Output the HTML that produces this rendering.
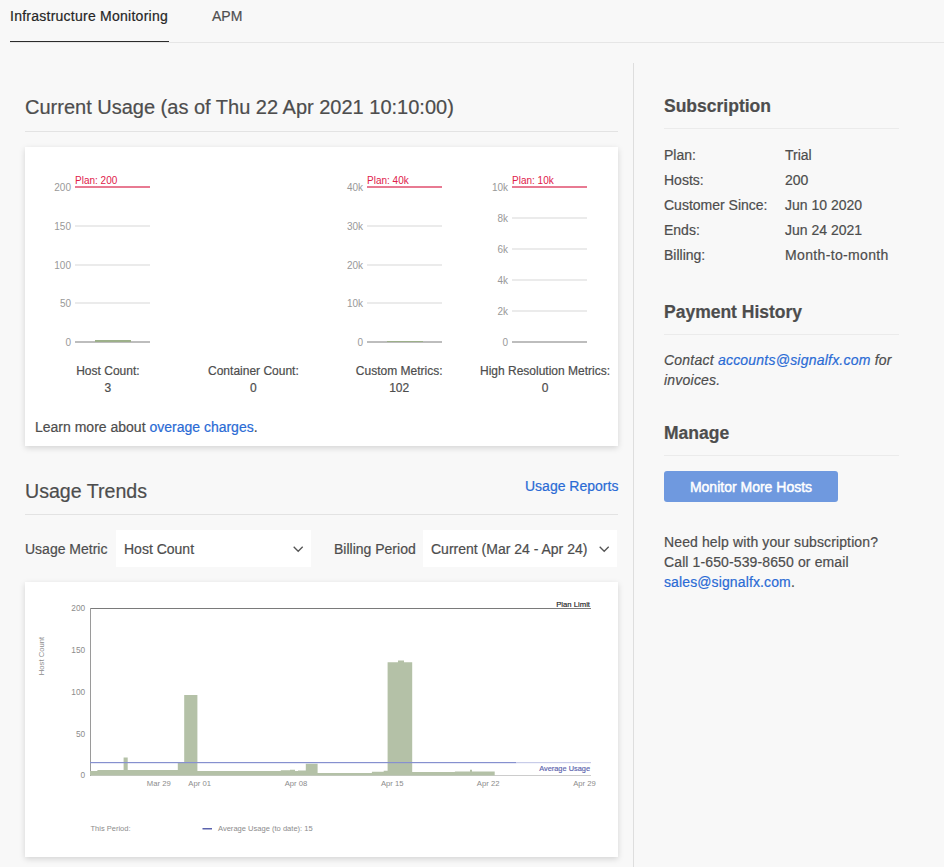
<!DOCTYPE html>
<html><head><meta charset="utf-8">
<style>
*{box-sizing:border-box;margin:0;padding:0}
html,body{width:944px;height:867px;overflow:hidden;background:#f8f8f8;font-family:"Liberation Sans",sans-serif;color:#4a4a4a;-webkit-text-stroke:0.2px currentColor}
.a{position:absolute;white-space:nowrap}
.hr{position:absolute;height:1px;background:#e3e3e3}
.card{position:absolute;background:#fff;box-shadow:0 2px 6px rgba(0,0,0,0.15)}
.lnk{color:#2a6bd5}
</style></head><body>
<!-- tabs -->
<div class="a" style="left:10px;top:8px;font-size:14px;line-height:16px;color:#262626;letter-spacing:0.25px">Infrastructure Monitoring</div>
<div class="a" style="left:212px;top:8px;font-size:14px;line-height:16px;color:#4f4f4f">APM</div>
<div class="hr" style="left:10px;top:42px;width:934px;background:#e6e6e6"></div>
<div class="a" style="left:10px;top:41px;width:159px;height:1px;background:#2b2b2b"></div>

<!-- vertical divider -->
<div class="a" style="left:633px;top:63px;width:1px;height:804px;background:#dedede"></div>

<!-- Current Usage -->
<div class="a" style="left:25px;top:97px;font-size:20px;line-height:20px;color:#4d4d4d">Current Usage (as of Thu 22 Apr 2021 10:10:00)</div>
<div class="hr" style="left:25px;top:131px;width:593px"></div>

<div class="card" style="left:25px;top:147px;width:593px;height:299px"></div>

<!-- usage trends -->
<div class="a" style="left:25px;top:481px;font-size:19.6px;line-height:20px;color:#4d4d4d">Usage Trends</div>
<div class="a lnk" style="left:525px;top:478px;font-size:14px;line-height:16px">Usage Reports</div>
<div class="hr" style="left:25px;top:514px;width:593px"></div>

<div class="a" style="left:25px;top:541px;font-size:14px;line-height:16px;color:#4d4d4d">Usage Metric</div>
<div class="a" style="left:116px;top:530px;width:195px;height:37px;background:#fff"></div>
<div class="a" style="left:124px;top:541px;font-size:14px;line-height:16px;color:#4d4d4d">Host Count</div>

<div class="a" style="left:334px;top:541px;font-size:14px;line-height:16px;color:#4d4d4d">Billing Period</div>
<div class="a" style="left:423px;top:530px;width:194px;height:37px;background:#fff"></div>
<div class="a" style="left:431px;top:541px;font-size:14px;line-height:16px;color:#4d4d4d">Current (Mar 24 - Apr 24)</div>

<div class="card" style="left:25px;top:582px;width:593px;height:275px"></div>

<!-- right column -->
<div class="a" style="left:664px;top:96px;font-size:17.5px;line-height:20px;font-weight:bold;color:#4d4d4d">Subscription</div>
<div class="hr" style="left:664px;top:128px;width:235px;background:#ebebeb"></div>

<div class="a" style="left:664px;top:147px;font-size:14px;line-height:16px;color:#4d4d4d">Plan:</div>
<div class="a" style="left:785px;top:147px;font-size:14px;line-height:16px;color:#4d4d4d">Trial</div>
<div class="a" style="left:664px;top:172px;font-size:14px;line-height:16px;color:#4d4d4d">Hosts:</div>
<div class="a" style="left:785px;top:172px;font-size:14px;line-height:16px;color:#4d4d4d">200</div>
<div class="a" style="left:664px;top:197px;font-size:14px;line-height:16px;color:#4d4d4d">Customer Since:</div>
<div class="a" style="left:785px;top:197px;font-size:14px;line-height:16px;color:#4d4d4d">Jun 10 2020</div>
<div class="a" style="left:664px;top:222px;font-size:14px;line-height:16px;color:#4d4d4d">Ends:</div>
<div class="a" style="left:785px;top:222px;font-size:14px;line-height:16px;color:#4d4d4d">Jun 24 2021</div>
<div class="a" style="left:664px;top:247px;font-size:14px;line-height:16px;color:#4d4d4d">Billing:</div>
<div class="a" style="left:785px;top:247px;font-size:14px;line-height:16px;color:#4d4d4d;letter-spacing:0.35px">Month-to-month</div>

<div class="a" style="left:664px;top:302px;font-size:17.5px;line-height:20px;font-weight:bold;color:#4d4d4d">Payment History</div>
<div class="hr" style="left:664px;top:334px;width:235px;background:#ebebeb"></div>
<div class="a" style="left:664px;top:350px;font-size:14px;line-height:20px;font-style:italic;color:#4d4d4d;white-space:normal;width:240px;letter-spacing:0.22px">Contact <span class="lnk">accounts@signalfx.com</span> for invoices.</div>

<div class="a" style="left:664px;top:423px;font-size:17.5px;line-height:20px;font-weight:bold;color:#4d4d4d">Manage</div>
<div class="hr" style="left:664px;top:455px;width:235px;background:#ebebeb"></div>
<div class="a" style="left:664px;top:471px;width:174px;height:31px;background:#6f99df;border-radius:3px;color:#fff;font-size:14px;line-height:33px;text-align:center;-webkit-text-stroke:0.45px #fff">Monitor More Hosts</div>

<div class="a" style="left:664px;top:532px;font-size:14px;line-height:20px;color:#4d4d4d;white-space:normal;width:260px;letter-spacing:0.12px">Need help with your subscription?<br>Call 1-650-539-8650 or email<br><span class="lnk">sales@signalfx.com</span>.</div>

<div class="a" style="left:35px;top:419px;font-size:14px;line-height:16px;color:#4d4d4d">Learn more about <span class="lnk">overage charges</span>.</div>
<svg class="a" style="left:293px;top:546px" width="11" height="7" viewBox="0 0 11 7"><path d="M0.7,0.7 L5.2,5.3 L9.7,0.7" fill="none" stroke="#555" stroke-width="1.3"/></svg>
<svg class="a" style="left:599px;top:546px" width="11" height="7" viewBox="0 0 11 7"><path d="M0.7,0.7 L5.2,5.3 L9.7,0.7" fill="none" stroke="#555" stroke-width="1.3"/></svg>
<!--CHARTS-->
<svg class="a" width="944" height="867" viewBox="0 0 944 867" font-family="Liberation Sans, sans-serif" style="left:0;top:0;-webkit-text-stroke:0">
<rect x="75" y="186" width="75" height="2" fill="#e87a92"/>
<text x="75" y="184" font-size="10" fill="#e0204a" text-anchor="start" >Plan: 200</text>
<text x="71" y="190.5" font-size="10" fill="#999999" text-anchor="end" >200</text>
<rect x="75" y="225" width="75" height="2" fill="#ebebeb"/>
<text x="71" y="229.5" font-size="10" fill="#999999" text-anchor="end" >150</text>
<rect x="75" y="264" width="75" height="2" fill="#ebebeb"/>
<text x="71" y="268.5" font-size="10" fill="#999999" text-anchor="end" >100</text>
<rect x="75" y="302" width="75" height="2" fill="#ebebeb"/>
<text x="71" y="306.5" font-size="10" fill="#999999" text-anchor="end" >50</text>
<rect x="75" y="341" width="75" height="2" fill="#bdbdbd"/>
<text x="71" y="345.5" font-size="10" fill="#999999" text-anchor="end" >0</text>
<rect x="367" y="186" width="75" height="2" fill="#e87a92"/>
<text x="367" y="184" font-size="10" fill="#e0204a" text-anchor="start" >Plan: 40k</text>
<text x="363" y="190.5" font-size="10" fill="#999999" text-anchor="end" >40k</text>
<rect x="367" y="225" width="75" height="2" fill="#ebebeb"/>
<text x="363" y="229.5" font-size="10" fill="#999999" text-anchor="end" >30k</text>
<rect x="367" y="264" width="75" height="2" fill="#ebebeb"/>
<text x="363" y="268.5" font-size="10" fill="#999999" text-anchor="end" >20k</text>
<rect x="367" y="302" width="75" height="2" fill="#ebebeb"/>
<text x="363" y="306.5" font-size="10" fill="#999999" text-anchor="end" >10k</text>
<rect x="367" y="341" width="75" height="2" fill="#bdbdbd"/>
<text x="363" y="345.5" font-size="10" fill="#999999" text-anchor="end" >0</text>
<rect x="512" y="186" width="75" height="2" fill="#e87a92"/>
<text x="512" y="184" font-size="10" fill="#e0204a" text-anchor="start" >Plan: 10k</text>
<text x="508" y="190.5" font-size="10" fill="#999999" text-anchor="end" >10k</text>
<rect x="512" y="217" width="75" height="2" fill="#ebebeb"/>
<text x="508" y="221.5" font-size="10" fill="#999999" text-anchor="end" >8k</text>
<rect x="512" y="248" width="75" height="2" fill="#ebebeb"/>
<text x="508" y="252.5" font-size="10" fill="#999999" text-anchor="end" >6k</text>
<rect x="512" y="279" width="75" height="2" fill="#ebebeb"/>
<text x="508" y="283.5" font-size="10" fill="#999999" text-anchor="end" >4k</text>
<rect x="512" y="310" width="75" height="2" fill="#ebebeb"/>
<text x="508" y="314.5" font-size="10" fill="#999999" text-anchor="end" >2k</text>
<rect x="512" y="341" width="75" height="2" fill="#bdbdbd"/>
<text x="508" y="345.5" font-size="10" fill="#999999" text-anchor="end" >0</text>
<rect x="95" y="340" width="36" height="2" fill="#9db08a"/>
<rect x="387" y="341" width="36" height="1" fill="#9db08a"/>
<text x="107.9" y="375" font-size="12" fill="#4d4d4d" text-anchor="middle" stroke="#4d4d4d" stroke-width="0.2">Host Count:</text>
<text x="107.9" y="392" font-size="12" fill="#4d4d4d" text-anchor="middle" stroke="#4d4d4d" stroke-width="0.2">3</text>
<text x="253.4" y="375" font-size="12" fill="#4d4d4d" text-anchor="middle" stroke="#4d4d4d" stroke-width="0.2">Container Count:</text>
<text x="253.4" y="392" font-size="12" fill="#4d4d4d" text-anchor="middle" stroke="#4d4d4d" stroke-width="0.2">0</text>
<text x="399.2" y="375" font-size="12" fill="#4d4d4d" text-anchor="middle" stroke="#4d4d4d" stroke-width="0.2">Custom Metrics:</text>
<text x="399.2" y="392" font-size="12" fill="#4d4d4d" text-anchor="middle" stroke="#4d4d4d" stroke-width="0.2">102</text>
<text x="545" y="375" font-size="12" fill="#4d4d4d" text-anchor="middle" stroke="#4d4d4d" stroke-width="0.2">High Resolution Metrics:</text>
<text x="545" y="392" font-size="12" fill="#4d4d4d" text-anchor="middle" stroke="#4d4d4d" stroke-width="0.2">0</text>

<text x="85.2" y="611.1" font-size="8.3" fill="#8c8c8c" text-anchor="end" >200</text>
<text x="85.2" y="652.9" font-size="8.3" fill="#8c8c8c" text-anchor="end" >150</text>
<text x="85.2" y="694.7" font-size="8.3" fill="#8c8c8c" text-anchor="end" >100</text>
<text x="85.2" y="736.5" font-size="8.3" fill="#8c8c8c" text-anchor="end" >50</text>
<text x="85.2" y="778.1" font-size="8.3" fill="#8c8c8c" text-anchor="end" >0</text>
<text x="0" y="0" font-size="7.7" fill="#8c8c8c" text-anchor="middle" transform="translate(43.5,656) rotate(-90)">Host Count</text>
<rect x="90" y="775" width="501" height="1" fill="#cccccc"/>
<rect x="90" y="608" width="501" height="1" fill="#7a7a7a"/>
<rect x="90" y="608" width="1" height="168" fill="#9a9a9a"/>
<path d="M90,771 L97.4,771 L97.4,770 L123.6,770 L123.6,757.5 L127.7,757.5 L127.7,770 L177.8,770 L177.8,762 L184.2,762 L184.2,695 L197.4,695 L197.4,771 L280.8,771 L280.8,770.3 L290,770.3 L290,769.8 L295,769.8 L295,771 L298,771 L298,770.5 L305.8,770.5 L305.8,763.8 L317.6,763.8 L317.6,773 L371.9,773 L371.9,771.7 L383.7,771.7 L383.7,770.8 L387.6,770.8 L387.6,662.2 L398,662.2 L398,660.5 L404,660.5 L404,662.2 L412.2,662.2 L412.2,772 L454.9,772 L454.9,771.4 L470,771.4 L470,769.8 L472,769.8 L472,771.4 L494.7,771.4 L494.7,775.5 L90,775.5 Z" fill="#b4c1a7"/>
<rect x="90" y="762" width="426.4" height="1.2" fill="#8690cf"/>
<rect x="516.4" y="762" width="74.6" height="1.2" fill="#c8cce9"/>
<text x="590" y="770.7" font-size="7.4" fill="#5b63ad" text-anchor="end" stroke="#5b63ad" stroke-width="0.15">Average Usage</text>
<text x="590" y="606.5" font-size="7.7" fill="#222222" text-anchor="end" stroke="#222" stroke-width="0.15">Plan Limit</text>
<text x="158.8" y="786" font-size="7.7" fill="#8c8c8c" text-anchor="middle" >Mar 29</text>
<text x="199.7" y="786" font-size="7.7" fill="#8c8c8c" text-anchor="middle" >Apr 01</text>
<text x="296" y="786" font-size="7.7" fill="#8c8c8c" text-anchor="middle" >Apr 08</text>
<text x="392.3" y="786" font-size="7.7" fill="#8c8c8c" text-anchor="middle" >Apr 15</text>
<text x="488.2" y="786" font-size="7.7" fill="#8c8c8c" text-anchor="middle" >Apr 22</text>
<text x="584.5" y="786" font-size="7.7" fill="#8c8c8c" text-anchor="middle" >Apr 29</text>
<text x="90.5" y="831" font-size="7.5" fill="#8c8c8c" text-anchor="start" >This Period:</text>
<rect x="202.5" y="828" width="9.5" height="1.5" fill="#5b63ad"/>
<text x="218" y="831" font-size="7.55" fill="#8c8c8c" text-anchor="start" >Average Usage (to date): 15</text>

</svg>
</body></html>
